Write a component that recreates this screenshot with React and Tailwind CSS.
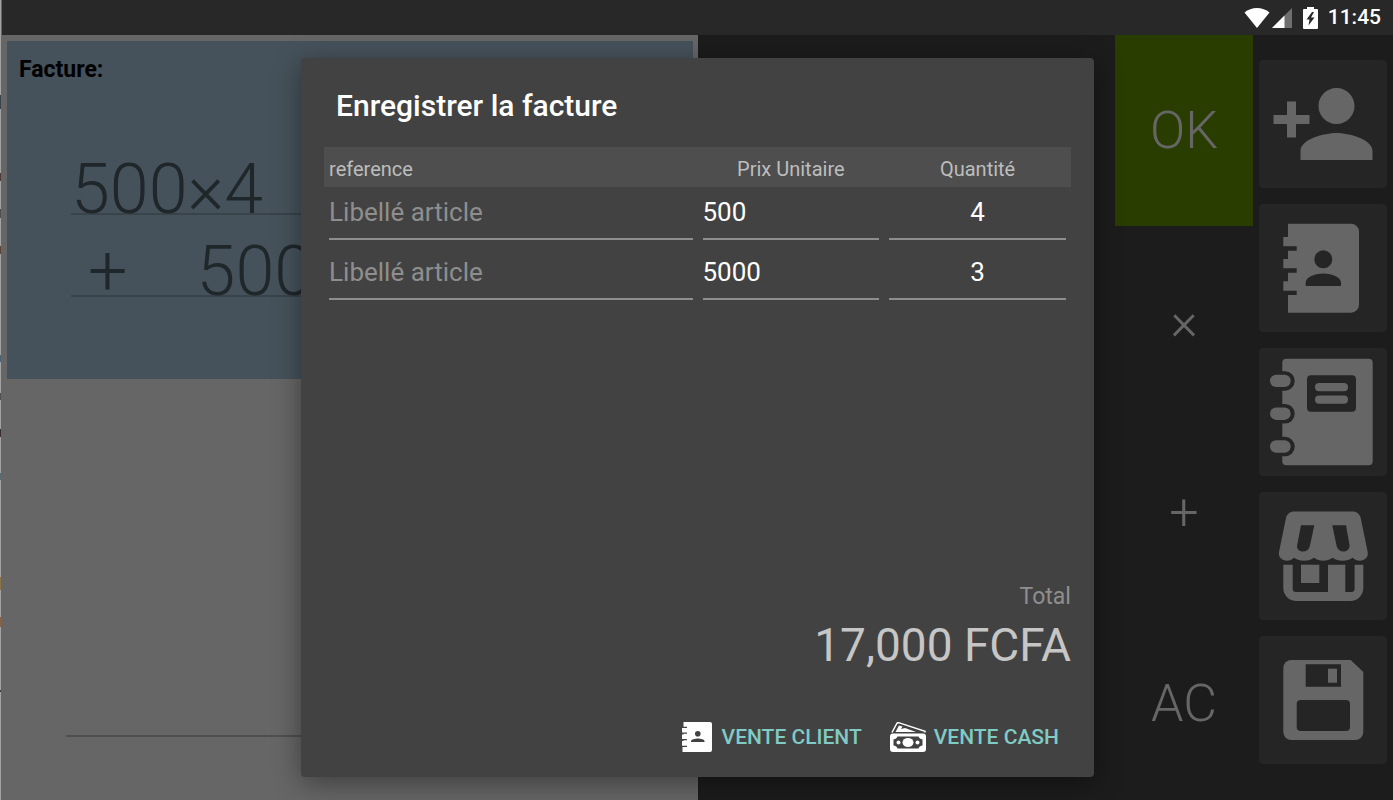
import React, { useState } from 'react';
import { MdPersonAdd } from 'react-icons/md';

const initialArticles = [
  { label: '', price: '500', quantity: '4' },
  { label: '', price: '5000', quantity: '3' },
];

// Thin sliver of the desktop behind the window: [height, class]
const edgeMarks = [
  [95, 'bg-[#a3a3a3]'],
  [14, 'bg-[#3b434a]'],
  [64, 'bg-[#a3a3a3]'],
  [8, 'bg-[#4a3a32]'],
  [28, 'bg-[#a3a3a3]'],
  [9, 'bg-[#4f4f4f]'],
  [28, 'bg-[#a3a3a3]'],
  [8, 'bg-[#5a4438]'],
  [101, 'bg-[#a3a3a3]'],
  [7, 'bg-[#4b6372]'],
  [31, 'bg-[#a3a3a3]'],
  [7, 'bg-[#505050]'],
  [29, 'bg-[#a3a3a3]'],
  [8, 'bg-[#3a2c2c]'],
  [36, 'bg-[#a3a3a3]'],
  [7, 'bg-[#5b6a70]'],
  [97, 'bg-[#a3a3a3]'],
  [13, 'bg-[#8a7344]'],
  [27, 'bg-[#a3a3a3]'],
  [10, 'bg-[#8a6242]'],
  [63, 'bg-[#a3a3a3]'],
  [2, 'bg-[#3f3f3f]'],
];

const WifiIcon = () => (
  <svg width="26" height="20" viewBox="0 0 26 20" fill="#fff" aria-hidden="true">
    <path d="M13 20 .5 4.5C4 1.600 8.300 0 13 0s9 1.600 12.500 4.500z" />
  </svg>
);

const SignalIcon = () => (
  <svg width="20" height="20" viewBox="0 0 20 20" aria-hidden="true">
    <path d="M0 20 20 0v20z" fill="#6f6f6f" />
    <path d="M0 20 12.500 7.500V20z" fill="#fff" />
  </svg>
);

const BatteryIcon = () => (
  <svg width="15" height="22" viewBox="0 0 15 22" aria-hidden="true">
    <path d="M4 0h7v2h3a1 1 0 0 1 1 1v18a1 1 0 0 1-1 1H1a1 1 0 0 1-1-1V3a1 1 0 0 1 1-1h3z" fill="#fff" />
    <path d="M9 5 3.500 12.500h3L5.500 18.500l6-8h-3.500L11 5z" fill="#282828" />
  </svg>
);

const ContactsIcon = () => (
  <svg className="size-full" viewBox="0 0 128 128" fill="#666" fillRule="evenodd" aria-hidden="true">
    <path d="M29 19.700h63a8 8 0 0 1 8 8v73a8 8 0 0 1-8 8H29V91h8.700v-4.300H24.300v-9.400H29V68.700h8.700v-4.400H24.300V55H29v-8.300h8.700v-4.400H24.300V33H29zM64.300 46.300a9 9 0 1 0 0 18 9 9 0 0 0 0-18zM46.700 82H82v-3.500c0-6-11-9-17.700-9s-17.600 3-17.600 9z" />
  </svg>
);

const NotebookIcon = () => (
  <svg className="size-full" viewBox="0 0 128 128" fill="#666" aria-hidden="true">
    <rect x="23.300" y="10.700" width="90.400" height="106.600" rx="4" />
    {[26.7, 59.5, 92.3].map((y) => (
      <g key={y}>
        <rect x="7" y={y - 3.5} width="28.700" height="19.500" rx="9.700" fill="#252525" />
        <rect x="11" y={y} width="20.700" height="12.400" rx="6.200" />
      </g>
    ))}
    <rect x="48" y="27.300" width="49" height="36.400" rx="4" fill="#252525" />
    <rect x="56" y="35" width="33" height="8.300" rx="4.100" />
    <rect x="56" y="47.500" width="33" height="8.300" rx="4.100" />
  </svg>
);

const StoreIcon = () => (
  <svg className="size-full" viewBox="0 0 128 128" fill="#666" fillRule="evenodd" aria-hidden="true">
    <path d="M35 19.500h58.700c4 0 7 2.500 8 6.500l7 34c1 5-3 8.700-8 8.700-2.500 0-5-1-7-3-3 2-6 3-10 3s-7.500-1-10.200-3c-2.500 2-6 3-9.200 3s-6.700-1-9.300-3c-2.700 2-6 3-10 3s-7-1-10-3c-2 2-4.500 3-7 3-5 0-9-3.700-8-8.700l7-34c1-4 4-6.500 8-6.500zM42 33.300 38.200 53c-.8 4 2 6.500 5.800 6.500s6-2 7-6l4.300-20.200zM73.300 33.300 77.500 53.500c1 4 3.500 6 7 6s6.500-2.500 6-6.500l-3.500-19.700z" />
    <path d="M24.300 72.700h9.400v24a3.300 3.300 0 0 0 3.300 3.300h32V72.700h17.300V100h6a3.300 3.300 0 0 0 3.300-3.300v-24h8.700V96a13 13 0 0 1-13 13h-54a13 13 0 0 1-13-13z" />
    <path d="M42 72.700h18.300V91H42z" />
  </svg>
);

const SaveIcon = () => (
  <svg className="size-full" viewBox="0 0 128 128" fill="#666" aria-hidden="true">
    <path d="M32.300 24h59.400l12.600 12v60a8 8 0 0 1-8 8h-64a8 8 0 0 1-8-8V32a8 8 0 0 1 8-8z" />
    <path d="M46.700 28.300H82v22.400H46.700z" fill="#252525" />
    <path d="M69 32.700h9v14h-9z" />
    <rect x="37.700" y="64" width="53.300" height="31" rx="4" fill="#252525" />
  </svg>
);

const ClientIcon = () => (
  <svg width="30" height="30" viewBox="0 0 30 30" fill="#fff" fillRule="evenodd" aria-hidden="true">
    <path d="M1.500 0H28a2 2 0 0 1 2 2v26a2 2 0 0 1-2 2H.5v-5H5v-1.200H0V19h1.500v-.8H5V17H0v-4.500h1.500v-.7H5v-1.200H0V6h5V4.800H1.500zM15.800 9a2.800 2.800 0 1 0 0 5.600 2.800 2.800 0 0 0 0-5.600zM9 20h13.600v-.6c0-1.800-4-2.800-6.800-2.800S9 17.600 9 19.400z" />
  </svg>
);

const CashIcon = () => (
  <svg width="36" height="30" viewBox="0 0 36 30" aria-hidden="true">
    <path d="M2 10.500 6.500 2C7 .8 8 .5 9.300.9L35 9.200v1.300" fill="none" stroke="#fff" strokeWidth="1.500" />
    <path d="M5.500 10 9 3.500l3.500 1-1.500 2.500 4-1 11 4z" fill="#fff" />
    <rect x="0" y="11.500" width="36" height="18.500" rx="3" fill="#fff" />
    <path d="M7.500 14.500h21c.5 1.500 2 2.700 4 2.900v6.200c-2 .2-3.500 1.400-4 2.900h-21c-.5-1.500-2-2.700-4-2.900v-6.200c2-.2 3.500-1.400 4-2.900z" fill="#424242" />
    <ellipse cx="18" cy="20.500" rx="5.500" ry="4.500" fill="#fff" />
    <circle cx="8.500" cy="20.500" r="2" fill="#fff" />
    <circle cx="27.500" cy="20.500" r="2" fill="#fff" />
  </svg>
);

const sideActions = [
  { name: 'Ajouter un client', icon: <MdPersonAdd className="size-[108px] text-[#666]" /> },
  { name: 'Clients', icon: <ContactsIcon /> },
  { name: 'Carnet', icon: <NotebookIcon /> },
  { name: 'Boutique', icon: <StoreIcon /> },
  { name: 'Enregistrer', icon: <SaveIcon /> },
];

const fieldClass =
  'block h-[53px] w-full border-b-2 border-[#8e8e8e] bg-transparent text-[26px] text-white outline-none placeholder:text-[#8e8e8e]';

const StatusBar = () => (
  <header className="flex h-[35px] shrink-0 items-center justify-end bg-[#282828] pr-3">
    <WifiIcon />
    <span className="ml-[2px]">
      <SignalIcon />
    </span>
    <span className="mr-[10px] ml-[11px]">
      <BatteryIcon />
    </span>
    <time className="text-[21px] leading-[35px] font-medium text-white">11:45</time>
  </header>
);

const Receipt = () => (
  <section className="flex w-1/2 flex-col bg-[#666] px-[5px] pt-[6px]">
    <div className="h-[338px] bg-[#46525b] pt-4 pl-3">
      <h1 className="text-[23px] leading-[26px] font-bold text-black">Facture:</h1>
      <div className="mt-[65px] ml-[52px] flex flex-col gap-[15px] text-[70px] leading-[82px] font-light whitespace-pre text-[#20272b]">
        <p className="h-[67px] border-b-2 border-[#39434a]">500×4</p>
        <p className="flex h-[67px] gap-[69px] border-b-2 border-[#39434a] pl-[17px]">
          <span>+</span>
          <span>5000×3</span>
        </p>
      </div>
    </div>
    <hr className="mt-auto mb-[63px] ml-[59px] border-t-2 border-[#4f4f4f]" />
  </section>
);

const InvoiceDialog = () => {
  const [articles, setArticles] = useState(initialArticles);

  const handleChange = (index, field, value) => {
    const updated = [...articles];
    updated[index] = { ...updated[index], [field]: value };
    setArticles(updated);
  };

  return (
    <div
      role="dialog"
      aria-labelledby="dialog-title"
      className="flex h-[94%] w-[57%] flex-col rounded-[4px] bg-[#424242] px-[23px] pb-4 shadow-[0_6px_28px_rgba(0,0,0,0.4)]"
    >
      <h2 id="dialog-title" className="px-3 pt-8 pb-[25px] text-[30px] leading-8 font-medium text-white">
        Enregistrer la facture
      </h2>

      <table className="w-full table-fixed">
        <thead>
          <tr className="h-10 bg-[#4e4e4e] text-[20px] text-[#bdbdbd]">
            <th className="w-1/2 px-[5px] pt-1 text-left font-normal">reference</th>
            <th className="w-1/4 px-[5px] pt-1 font-normal">Prix Unitaire</th>
            <th className="w-1/4 px-[5px] pt-1 font-normal">Quantité</th>
          </tr>
        </thead>
        <tbody>
          {articles.map((article, index) => (
            <tr key={index} className="h-[60px] align-top">
              <td className="px-[5px]">
                <input
                  aria-label="reference"
                  placeholder="Libellé article"
                  value={article.label}
                  onChange={(e) => handleChange(index, 'label', e.target.value)}
                  className={fieldClass}
                />
              </td>
              <td className="px-[5px]">
                <input
                  aria-label="Prix Unitaire"
                  value={article.price}
                  onChange={(e) => handleChange(index, 'price', e.target.value)}
                  className={fieldClass}
                />
              </td>
              <td className="px-[5px]">
                <input
                  aria-label="Quantité"
                  value={article.quantity}
                  onChange={(e) => handleChange(index, 'quantity', e.target.value)}
                  className={`${fieldClass} text-center`}
                />
              </td>
            </tr>
          ))}
        </tbody>
      </table>

      <div className="mt-auto text-right">
        <p className="mb-[6px] text-[23px] leading-7 text-[#8e8e8e]">Total</p>
        <p className="text-[46px] leading-[56px] text-[#c6c6c6]">17,000 FCFA</p>
      </div>

      <div className="mt-10 flex h-12 justify-end gap-1 text-[21px] font-medium text-[#80cbc4]">
        <button className="flex items-center gap-[10px] px-3">
          <ClientIcon />
          <span className="pt-[2px]">VENTE CLIENT</span>
        </button>
        <button className="flex items-center gap-2 px-3">
          <CashIcon />
          <span className="pt-[2px]">VENTE CASH</span>
        </button>
      </div>
    </div>
  );
};

export default function App() {
  return (
    <div className="flex h-screen overflow-hidden bg-[#1c1c1c] font-['Roboto',sans-serif]">
      <div className="w-[2px] shrink-0 border-r border-[#666] bg-[#a3a3a3]">
        {edgeMarks.map(([height, color], index) => (
          <div key={index} className={color} style={{ height }} />
        ))}
      </div>

      <div className="flex min-w-0 flex-1 flex-col">
        <StatusBar />
        <main className="relative flex min-h-0 flex-1">
          <Receipt />
          <div className="flex-1" />

          {/* Operators */}
          <div className="grid w-[138px] grid-rows-4 text-[52px] font-light text-[#666]">
            <button className="bg-[#2a3d00]">OK</button>
            <button>×</button>
            <button>+</button>
            <button>AC</button>
          </div>

          {/* Side actions */}
          <nav className="flex w-[140px] flex-col gap-4 px-[6px] pt-[25px]">
            {sideActions.map((action) => (
              <button
                key={action.name}
                aria-label={action.name}
                className="flex size-32 shrink-0 items-center justify-center rounded-[4px] bg-[#252525]"
              >
                {action.icon}
              </button>
            ))}
          </nav>

          <div className="absolute inset-0 flex items-center justify-center">
            <InvoiceDialog />
          </div>
        </main>
      </div>
    </div>
  );
}
